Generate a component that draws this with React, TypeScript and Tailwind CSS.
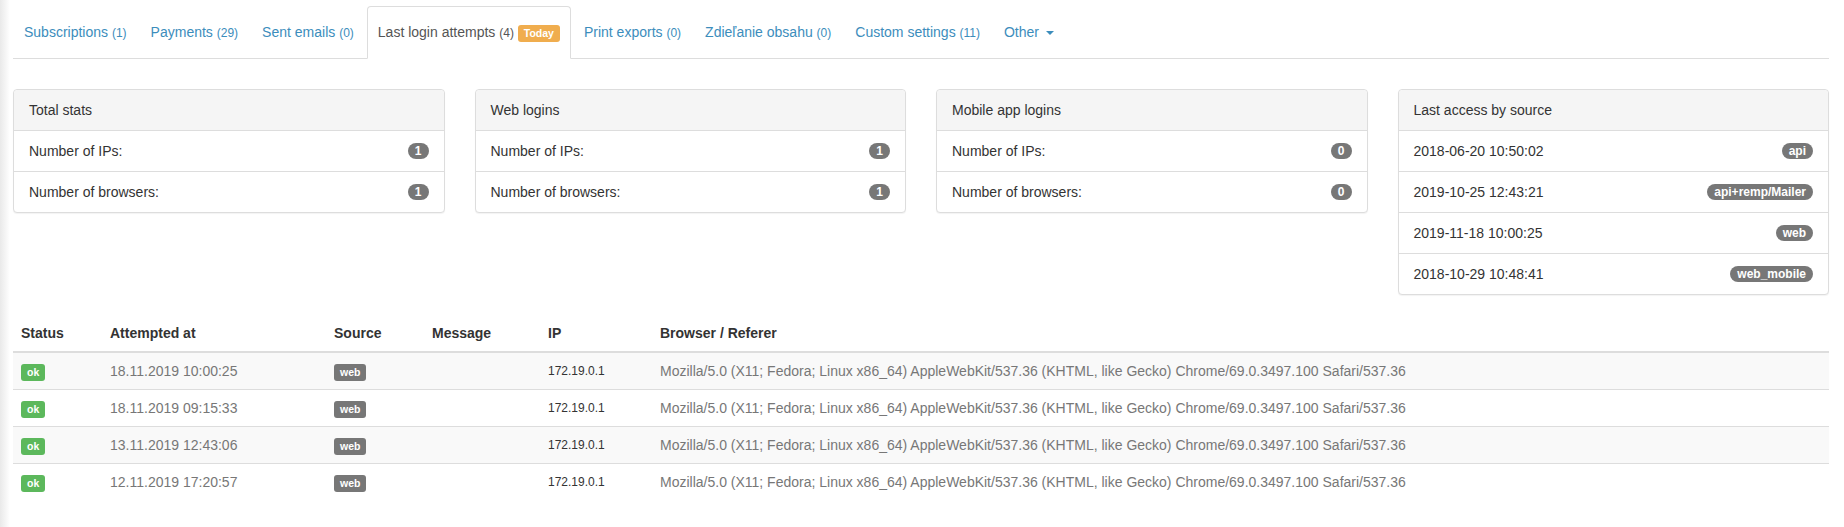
const tabs = [
  { label: 'Subscriptions', count: '(1)' },
  { label: 'Payments', count: '(29)' },
  { label: 'Sent emails', count: '(0)' },
  { label: 'Last login attempts', count: '(4)', active: true },
  { label: 'Print exports', count: '(0)' },
  { label: 'Zdieľanie obsahu', count: '(0)' },
  { label: 'Custom settings', count: '(11)' },
]

const statPanels = [
  { title: 'Total stats', ips: '1', browsers: '1' },
  { title: 'Web logins', ips: '1', browsers: '1' },
  { title: 'Mobile app logins', ips: '0', browsers: '0' },
]

const accesses = [
  { at: '2018-06-20 10:50:02', source: 'api' },
  { at: '2019-10-25 12:43:21', source: 'api+remp/Mailer' },
  { at: '2019-11-18 10:00:25', source: 'web' },
  { at: '2018-10-29 10:48:41', source: 'web_mobile' },
]

const attempts = ['18.11.2019 10:00:25', '18.11.2019 09:15:33', '13.11.2019 12:43:06', '12.11.2019 17:20:57']

const ua =
  'Mozilla/5.0 (X11; Fedora; Linux x86_64) AppleWebKit/537.36 (KHTML, like Gecko) Chrome/69.0.3497.100 Safari/537.36'

function Badge({ children }: { children: React.ReactNode }) {
  return (
    <span className="inline-block rounded-[10px] bg-[#777] px-[7px] py-[2px] text-[12px] leading-[12px] font-bold text-white">
      {children}
    </span>
  )
}

function Label({ children, color }: { children: React.ReactNode; color: string }) {
  return (
    <span
      className={`inline-block rounded-[3px] px-[6px] pt-[3px] pb-[3px] align-middle text-[10.5px] leading-[11px] font-bold text-white ${color}`}
    >
      {children}
    </span>
  )
}

function Panel({ title, children }: { title: string; children: React.ReactNode }) {
  return (
    <div className="self-start rounded-[4px] border border-[#ddd] bg-white shadow-[0_1px_1px_rgba(0,0,0,0.05)]">
      <div className="rounded-t-[4px] border-b border-[#ddd] bg-[#f5f5f5] px-[15px] py-[10px] leading-5 text-[#333]">
        {title}
      </div>
      <ul>{children}</ul>
    </div>
  )
}

function Row({ label, value }: { label: string; value: string }) {
  return (
    <li className="flex items-center justify-between border-b border-[#ddd] px-[15px] py-[10px] leading-5 text-[#333] last:border-b-0">
      <span>{label}</span>
      <Badge>{value}</Badge>
    </li>
  )
}

export default function App() {
  return (
    <div className="flex min-h-[527px] bg-white font-['Liberation_Sans',Arial,sans-serif] text-[14px] text-[#333]">
      <div className="w-[10px] shrink-0 bg-gradient-to-r from-[#e9e9e9] to-white" />
      <div className="mr-[15px] ml-[3px] w-[1816px] pt-[6px]">
        <ul className="flex border-b border-[#ddd]">
          {tabs.map((t) =>
            t.active ? (
              <li key={t.label} className="-mb-px mr-[2px]">
                <span className="block rounded-t-[4px] border border-[#ddd] border-b-white bg-white px-[10px] py-[15px] leading-5 text-[#555]">
                  {t.label} <span className="text-[12px]">{t.count}</span>{' '}
                  <Label color="bg-[#f0ad4e]">Today</Label>
                </span>
              </li>
            ) : (
              <li key={t.label} className="-mb-px mr-[2px]">
                <span className="block border border-transparent px-[10px] py-[15px] leading-5 text-[#3c8dbc]">
                  {t.label} <span className="text-[12px]">{t.count}</span>
                </span>
              </li>
            ),
          )}
          <li className="-mb-px mr-[2px]">
            <span className="flex items-center border border-transparent px-[10px] py-[15px] leading-5 text-[#3c8dbc]">
              Other
              <span className="ml-[7px] mt-[2px] h-0 w-0 border-x-[4px] border-t-[4px] border-x-transparent border-t-[#3c8dbc]" />
            </span>
          </li>
        </ul>

        <div className="mt-[30px] grid grid-cols-4 gap-[30px]">
          {statPanels.map((p) => (
            <Panel key={p.title} title={p.title}>
              <Row label="Number of IPs:" value={p.ips} />
              <Row label="Number of browsers:" value={p.browsers} />
            </Panel>
          ))}
          <Panel title="Last access by source">
            {accesses.map((a) => (
              <Row key={a.source} label={a.at} value={a.source} />
            ))}
          </Panel>
        </div>

        <table className="mt-[20px] w-full table-fixed border-collapse">
          <thead>
            <tr className="border-b-2 border-[#ddd] text-left font-bold text-[#333]">
              <th className="w-[89px] p-[8px] leading-5">Status</th>
              <th className="w-[224px] p-[8px] leading-5">Attempted at</th>
              <th className="w-[98px] p-[8px] leading-5">Source</th>
              <th className="w-[116px] p-[8px] leading-5">Message</th>
              <th className="w-[112px] p-[8px] leading-5">IP</th>
              <th className="p-[8px] leading-5">Browser / Referer</th>
            </tr>
          </thead>
          <tbody>
            {attempts.map((d, i) => (
              <tr key={d} className={`border-t border-[#ddd] first:border-t-0 ${i % 2 === 0 ? 'bg-[#f9f9f9]' : ''}`}>
                <td className="p-[8px] leading-5">
                  <Label color="bg-[#5cb85c]">ok</Label>
                </td>
                <td className="p-[8px] leading-5 text-[#777]">{d}</td>
                <td className="p-[8px] leading-5">
                  <Label color="bg-[#777]">web</Label>
                </td>
                <td className="p-[8px] leading-5" />
                <td className="p-[8px] text-[12px] leading-5 text-[#333]">172.19.0.1</td>
                <td className="truncate p-[8px] leading-5 text-[#777]">{ua}</td>
              </tr>
            ))}
          </tbody>
        </table>
      </div>
    </div>
  )
}
